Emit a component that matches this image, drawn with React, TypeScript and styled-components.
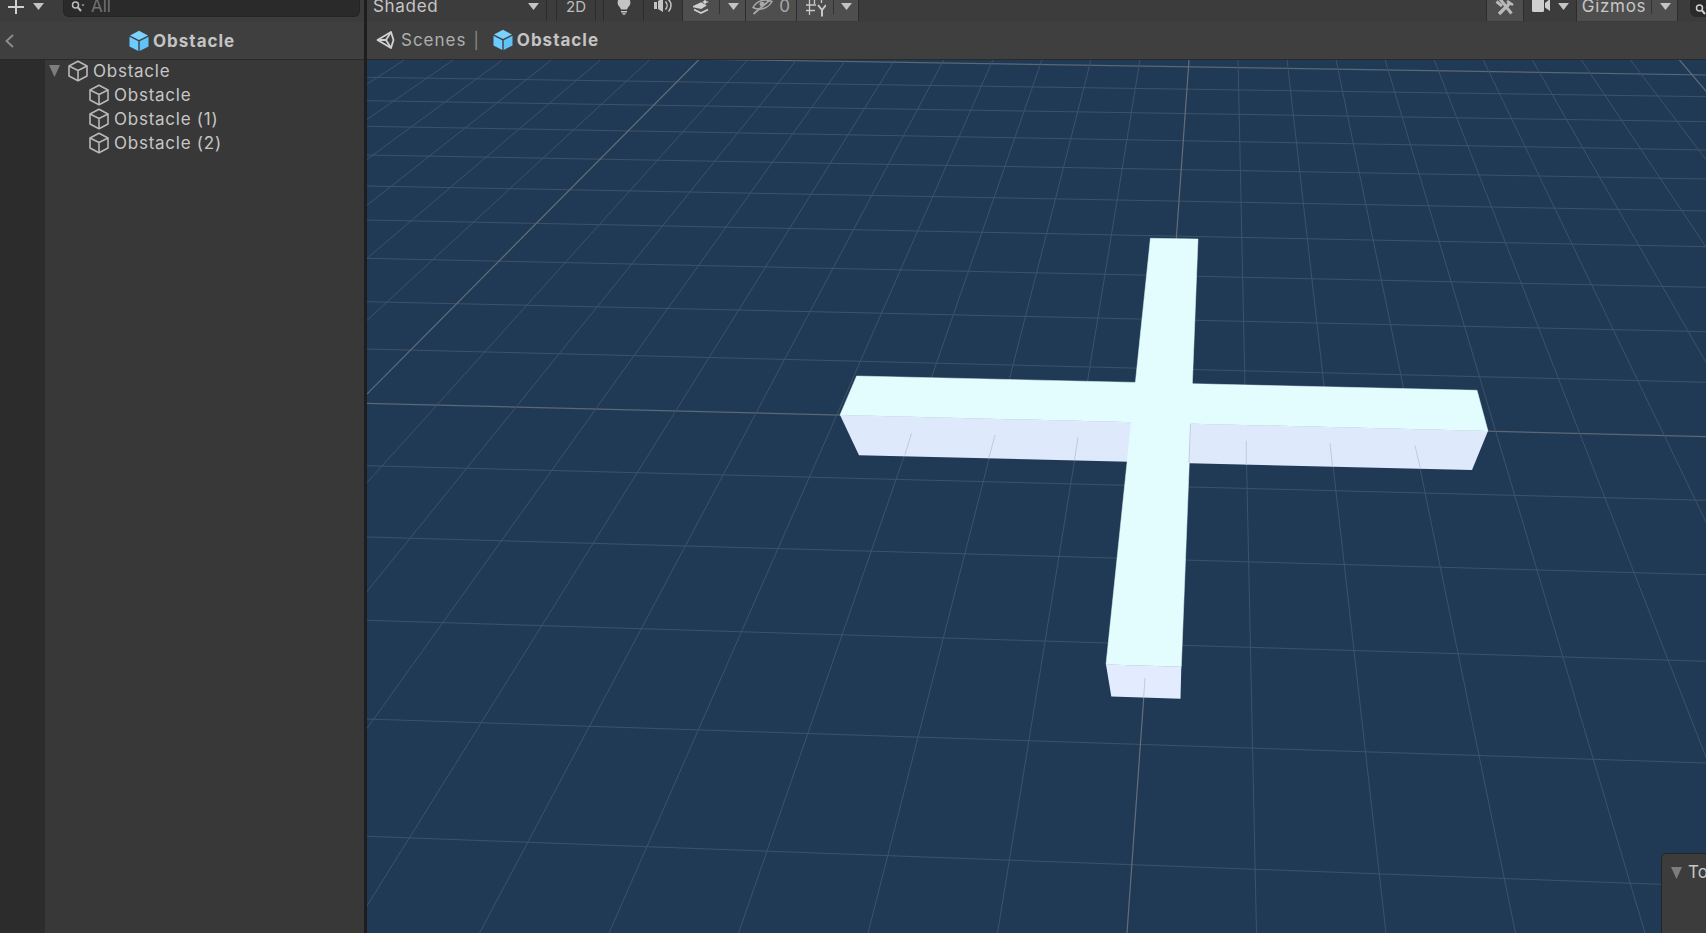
import styled, { createGlobalStyle } from "styled-components";

const GlobalStyle = createGlobalStyle`
   html, body {
      margin: 0;
      padding: 0;
      height: 100%;
      overflow: hidden;
      background: #383838;
   }
   #root {
      height: 100%;
   }
`;

// ground grid: the lines that run into the distance, taken at y=60 and y=933
const DEPTH_LINES = Array.from({ length: 27 }, (_, n) => {
   const i = n - 16;
   return { i, top: 1189 + 49.05 * i, bottom: 1127 + 129.5 * i };
});

// the lines that cross them: y at the left and at the right of the view
const CROSS_LINES = [
   [54, 75, true],
   [77.3, 96.7, false],
   [100.7, 121.7, false],
   [126.3, 150, false],
   [155, 179, false],
   [186, 211, false],
   [220, 246.7, false],
   [258.3, 287.3, false],
   [301.7, 331.7, false],
   [349, 382.3, false],
   [403.3, 436.7, true],
   [465.7, 500.3, false],
   [537, 574.7, false],
   [620.3, 661.3, false],
   [719, 763, false],
   [836.3, 886, false],
] as const;

// bits of grid that show through the side of the bars
const SIDE_TICKS = [
   [911.5, 433.3, 904.8, 455.3],
   [995, 435, 988.8, 458.3],
   [1078, 437.3, 1074.5, 460],
   [1246.3, 440.7, 1246.3, 465],
   [1330, 443.3, 1332.5, 466.7],
   [1415, 445.7, 1420.4, 468.3],
   [1145, 678, 1143.7, 697],
   [1190.5, 424, 1189, 463],
];

function OutlineCube() {
   return (
      <svg width="20" height="22" viewBox="0 0 20 22" fill="none" stroke="#b8b8b8" strokeWidth="1.600" strokeLinejoin="round">
         <path d="M10 1.200 19 6v10L10 20.800 1 16V6Z" />
         <path d="M1 6 10 10.500 19 6M10 10.500V20.800" />
      </svg>
   );
}

function BlueCube() {
   return (
      <svg width="20" height="22" viewBox="0 0 20 22" fill="#6ccbff">
         <path d="M10 .8 19 5.500 10 10 1 5.500Z" fill="#7bd2ff" />
         <path d="M.5 6.800 9.300 11.300V21L.5 16.500Z" />
         <path d="M19.500 6.800 10.700 11.300V21L19.500 16.500Z" fill="#5fc3f8" />
      </svg>
   );
}

function UnityLogo() {
   return (
      <svg width="19" height="20" viewBox="0 0 19 20" fill="none" stroke="#d2d2d2" strokeWidth="1.800" strokeLinejoin="round">
         <path d="M1.500 10 15 2l2.500 8L15 18Z" />
         <path d="M1.500 10H10L15 2M10 10l5 8" />
      </svg>
   );
}

function Caret({ className, color = "#c4c4c4", tall }: { className?: string; color?: string; tall?: boolean }) {
   return (
      <svg className={className} width="11" height={tall ? 12 : 7} viewBox="0 0 11 7" preserveAspectRatio="none">
         <path d="M0 0h11L5.500 7Z" fill={color} />
      </svg>
   );
}

function BulbIcon() {
   return (
      <svg width="14" height="16" viewBox="0 0 14 16" fill="#c4c4c4">
         <path d="M7-4a6.500 6.500 0 0 1 4 11.500L10 9.500H4L3 7.500A6.500 6.500 0 0 1 7-4Z" />
         <path d="M4 11h6v1.500H4ZM5 13.200h4L8 14.800H6Z" />
      </svg>
   );
}

function SpeakerIcon() {
   return (
      <svg width="18" height="14" viewBox="0 0 18 14" fill="#c4c4c4">
         <path d="M0 2h3v7H0ZM4 1l5-3v14L4 9Z" />
         <path d="M11.500 1.500a6 6 0 0 1 0 8M14.500-.5a8.500 8.500 0 0 1 0 12" fill="none" stroke="#c4c4c4" strokeWidth="1.500" />
      </svg>
   );
}

function LayersIcon() {
   return (
      <svg width="17" height="15" viewBox="0 0 17 15" fill="none" stroke="#d0d0d0" strokeWidth="1.800">
         <path d="M1 6.500 8 3.200l4 2.300-4 2.500Z" fill="#d0d0d0" />
         <path d="M1 9.500 8 13l7-3.500" />
         <path d="M12-1l1 2 3 1-3 1-1 2-1-2-2-1 2-1Z" fill="#d0d0d0" stroke="none" />
      </svg>
   );
}

function EyeOffIcon() {
   return (
      <svg width="21" height="15" viewBox="0 0 21 15" fill="none" stroke="#a8a8a8" strokeWidth="1.500">
         <path d="M1 7.500C5 .5 13-2 20 1.500 16 8.500 8 11 1 7.500Z" />
         <path d="M1.500 14 19 -1" strokeWidth="1.800" />
         <circle cx="10" cy="4" r="2.500" fill="#a8a8a8" stroke="none" />
      </svg>
   );
}

function GridSnapIcon() {
   return (
      <svg width="20" height="17" viewBox="0 0 20 17" fill="none" stroke="#c8c8c8" strokeWidth="1.300">
         <path d="M0 5h10M0 10.500h9M3.500 0v15M8.500 0v4" />
         <path d="M12 5l4 5 4-5M16 10v6.500" strokeWidth="2" />
         <path d="M15.500 0v3" />
      </svg>
   );
}

function ToolsIcon() {
   return (
      <svg width="20" height="16" viewBox="0 0 20 16" fill="none" stroke="#b9b9b9">
         <path d="M15 3 4 14" strokeWidth="3.400" />
         <path d="M5-1 16.500 13.500" strokeWidth="3" />
         <path d="M1.500 1.500 7 6" strokeWidth="3" />
         <path d="M12 1 18 5" strokeWidth="2.600" />
      </svg>
   );
}

function CameraIcon() {
   return (
      <svg width="18" height="13" viewBox="0 0 18 13" fill="#cfcfcf">
         <rect x="0" y="-2" width="12" height="14" rx="1.500" />
         <path d="M13 3 18-1v12l-5-3.500Z" />
      </svg>
   );
}

function SearchIcon({ stroke = "#bdbdbd" }: { stroke?: string }) {
   return (
      <svg width="14" height="12" viewBox="0 0 14 12" fill="none" stroke={stroke} strokeWidth="1.500">
         <circle cx="4.500" cy="4" r="3" />
         <path d="M7 6.500 10 10" strokeWidth="2" />
         <path d="M10.500 3.500h3l-1.500 1.800Z" fill={stroke} stroke="none" />
      </svg>
   );
}

function SceneDrawing() {
   return (
      <SceneSvg viewBox="367 60 1339 873" preserveAspectRatio="none">
         {CROSS_LINES.map(([left, right, major]) => (
            <line
               key={left}
               x1="367"
               y1={left}
               x2="1706"
               y2={right}
               stroke={major ? "#5b6875" : "#3e5267"}
               strokeWidth={major ? 1.200 : 1}
            />
         ))}
         {DEPTH_LINES.map(({ i, top, bottom }) => (
            <line
               key={i}
               x1={top}
               y1="60"
               x2={bottom}
               y2="933"
               stroke={i % 10 === 0 ? "#636d78" : "#3e5267"}
               strokeWidth={i % 10 === 0 ? 1.200 : 1}
            />
         ))}
         <polygon points="840,415 859,455.300 1472,470 1488,431" fill="#dfe9fc" />
         <polygon points="856.600,376 1477,390.300 1488,431 840,415" fill="#e3fdff" stroke="#e3fdff" strokeWidth="0.500" />
         <polygon points="1106,664.500 1181.300,666.700 1180.500,698.700 1111.300,696.500" fill="#e2ecfe" />
         <polygon points="1150.400,238.300 1198,239 1181.300,666.700 1106,664.500" fill="#e3fdff" stroke="#e3fdff" strokeWidth="0.500" />
         {SIDE_TICKS.map(([x1, y1, x2, y2]) => (
            <line key={x1} x1={x1} y1={y1} x2={x2} y2={y2} stroke="#c3cad8" strokeWidth="1" />
         ))}
      </SceneSvg>
   );
}

const TREE_CHILDREN = ["Obstacle", "Obstacle (1)", "Obstacle (2)"];

function App() {
   return (
      <Page>
         <GlobalStyle />
         <Sidebar>
            <SideToolbar>
               <PlusSign>
                  <svg width="16" height="16" viewBox="0 0 16 16" fill="#d0d0d0">
                     <path d="M7 0h2v16H7Z" />
                     <path d="M0 7h16v2H0Z" />
                  </svg>
               </PlusSign>
               <ToolCaret />
               <SearchField>
                  <SearchIcon />
                  <SearchHint>All</SearchHint>
               </SearchField>
            </SideToolbar>
            <PanelHeader>
               <BackChevron>
                  <svg width="9" height="14" viewBox="0 0 9 14" fill="none" stroke="#8f8f8f" strokeWidth="1.800">
                     <path d="M8 1 1.500 7 8 13" />
                  </svg>
               </BackChevron>
               <HeaderTitle $centered>
                  <BlueCube />
                  <BoldName>Obstacle</BoldName>
               </HeaderTitle>
            </PanelHeader>
            <SideBody>
               <Gutter />
               <Tree>
                  <TreeRow $depth={0}>
                     <Caret color="#7d7d7d" tall />
                     <OutlineCube />
                     <RowLabel>Obstacle</RowLabel>
                  </TreeRow>
                  {TREE_CHILDREN.map((name) => (
                     <TreeRow key={name} $depth={1}>
                        <OutlineCube />
                        <RowLabel>{name}</RowLabel>
                     </TreeRow>
                  ))}
               </Tree>
            </SideBody>
         </Sidebar>
         <Splitter />
         <Main>
            <SceneToolbar>
               <ShadedSelect>
                  <span>Shaded</span>
                  <Caret />
               </ShadedSelect>
               <ToolCell $width={10} />
               <ToolCell $width={39}>
                  <SmallLabel>2D</SmallLabel>
               </ToolCell>
               <ToolCell $width={8} />
               <ToolCell $width={40}>
                  <BulbIcon />
               </ToolCell>
               <ToolCell $width={39}>
                  <SpeakerIcon />
               </ToolCell>
               <ToolCell $width={38} $active $joined>
                  <LayersIcon />
                  <InnerRule />
               </ToolCell>
               <ToolCell $width={25} $active>
                  <ToolCaret />
               </ToolCell>
               <ToolCell $width={51} $active>
                  <EyeOffIcon />
                  <CountLabel>0</CountLabel>
               </ToolCell>
               <ToolCell $width={38} $active $joined>
                  <GridSnapIcon />
                  <InnerRule />
               </ToolCell>
               <ToolCell $width={24} $active>
                  <ToolCaret />
               </ToolCell>
               <ToolbarSpacer />
               <ToolCell $width={38} $active $leading>
                  <ToolsIcon />
               </ToolCell>
               <ToolCell $width={53}>
                  <CameraIcon />
                  <CameraCaret />
               </ToolCell>
               <ToolCell $width={76} $active $joined>
                  <GizmosLabel>Gizmos</GizmosLabel>
                  <InnerRule />
               </ToolCell>
               <ToolCell $width={25} $active>
                  <ToolCaret />
               </ToolCell>
               <SceneSearch>
                  <SearchIcon stroke="#cfcfcf" />
               </SceneSearch>
            </SceneToolbar>
            <PanelHeader>
               <Breadcrumbs>
                  <UnityLogo />
                  <ScenesLink>Scenes</ScenesLink>
                  <CrumbDivider>|</CrumbDivider>
                  <HeaderTitle>
                     <BlueCube />
                     <BoldName>Obstacle</BoldName>
                  </HeaderTitle>
               </Breadcrumbs>
            </PanelHeader>
            <Viewport>
               <SceneDrawing />
               <ToolOverlay>
                  <Caret color="#7d7d7d" tall />
                  <OverlayTitle>Tool Settings</OverlayTitle>
               </ToolOverlay>
            </Viewport>
         </Main>
      </Page>
   );
}

export default App;

const Page = styled.div`
   display: flex;
   width: 100%;
   height: 100%;
   overflow: hidden;
   font-family: Inter, "Liberation Sans", sans-serif;
   color: #c6c6c6;
`;

const Sidebar = styled.aside`
   display: flex;
   flex-direction: column;
   flex: 0 0 364px;
`;

const Splitter = styled.div`
   flex: 0 0 3px;
   background-color: #1d1d1d;
`;

const Main = styled.main`
   display: flex;
   flex-direction: column;
   flex: 1;
   min-width: 0;
`;

const ToolCaret = styled(Caret)`
   margin-top: 3px;
`;

const CameraCaret = styled(Caret)`
   margin: 3px 0 0 8px;
`;

const SideToolbar = styled.div`
   display: flex;
   align-items: flex-start;
   flex: 0 0 22px;
   min-height: 0;
   overflow: hidden;
   padding-left: 8px;
   background-color: #3c3c3c;

   > svg {
      margin-left: 9px;
   }
`;

const PlusSign = styled.span`
   display: block;
   height: 14px;
   overflow: hidden;

   svg {
      display: block;
      margin-top: -1px;
   }
`;

const SearchField = styled.div`
   display: flex;
   align-items: flex-start;
   gap: 6px;
   width: 297px;
   height: 17px;
   margin-left: 19px;
   padding-left: 7px;
   box-sizing: border-box;
   background-color: #2a2a2a;
   border-radius: 0 0 6px 6px;
   border: 1px solid #242424;
   border-top: none;

   svg {
      margin-top: 1px;
   }
`;

const SearchHint = styled.span`
   font-size: 17px;
   line-height: 13px;
   color: #727272;
`;

const PanelHeader = styled.div`
   display: flex;
   align-items: center;
   flex: 0 0 38px;
   min-height: 0;
   box-sizing: border-box;
   background-color: #3f3f3f;
   border-bottom: 1px solid #2a2a2a;
`;

const BackChevron = styled.span`
   display: flex;
   margin-left: 5px;
`;

const HeaderTitle = styled.div<{ $centered?: boolean }>`
   display: flex;
   align-items: center;
   gap: 4px;
   margin-left: ${(p) => (p.$centered ? "115px" : "0")};
`;

const BoldName = styled.span`
   font-size: 17px;
   font-weight: 700;
   letter-spacing: 1px;
   color: #c4c4c4;
`;

const Breadcrumbs = styled.div`
   display: flex;
   align-items: center;
   padding: 0 0 2px 9px;
`;

const ScenesLink = styled.span`
   margin-left: 6px;
   font-size: 17px;
   letter-spacing: 1px;
   color: #aeaeae;
`;

const CrumbDivider = styled.span`
   margin: 0 14px 0 7px;
   font-size: 16px;
   color: #8c8c8c;
`;

const SideBody = styled.div`
   display: flex;
   flex: 1;
`;

const Gutter = styled.div`
   flex: 0 0 45px;
   background-color: #2c2c2c;
`;

const Tree = styled.ul`
   flex: 1;
   margin: 0;
   padding: 0;
   list-style: none;
   background-color: #383838;
`;

const TreeRow = styled.li<{ $depth: number }>`
   display: flex;
   align-items: center;
   height: 24px;
   box-sizing: border-box;
   padding: 0 0 2px ${(p) => (p.$depth === 0 ? 4 : 44)}px;

   > svg:first-child {
      margin-right: ${(p) => (p.$depth === 0 ? 8 : 0)}px;
   }
`;

const RowLabel = styled.span`
   margin-left: 5px;
   font-size: 17px;
   letter-spacing: 0.75px;
   color: #c6c6c6;
`;

const SceneToolbar = styled.div`
   display: flex;
   align-items: stretch;
   flex: 0 0 22px;
   min-height: 0;
   overflow: hidden;
   background-color: #3c3c3c;
`;

const ShadedSelect = styled.div`
   display: flex;
   justify-content: space-between;
   align-items: flex-start;
   flex: 0 0 180px;
   box-sizing: border-box;
   padding: 0 7px 0 6px;
   border-right: 1px solid #2c2c2c;
   margin-bottom: 1px;
   font-size: 17px;
   line-height: 13px;
   letter-spacing: 0.7px;
   color: #c6c6c6;

   svg {
      margin-top: 3px;
   }
`;

const ToolCell = styled.div<{ $width: number; $active?: boolean; $joined?: boolean; $leading?: boolean }>`
   position: relative;
   display: flex;
   justify-content: center;
   align-items: flex-start;
   flex: 0 0 ${(p) => p.$width}px;
   box-sizing: border-box;
   margin-bottom: 1px;
   background-color: ${(p) => (p.$active ? "#4e4e4e" : "transparent")};
   border-right: 1px solid ${(p) => (p.$joined ? "transparent" : "#2c2c2c")};
   ${(p) => (p.$leading ? "border-left: 1px solid #2c2c2c;" : "")}
`;

// short rule between a button and its drop-down arrow
const InnerRule = styled.span`
   position: absolute;
   top: 0;
   right: 0;
   width: 1px;
   height: 14px;
   background-color: #333333;
`;

const SmallLabel = styled.span`
   font-size: 15px;
   line-height: 13px;
   color: #bdbdbd;
`;

const CountLabel = styled.span`
   margin-left: 6px;
   font-size: 17px;
   line-height: 13px;
   color: #a8a8a8;
`;

const GizmosLabel = styled.span`
   margin-right: 1px;
   font-size: 17px;
   line-height: 13px;
   letter-spacing: 0.7px;
   color: #c6c6c6;
`;

const ToolbarSpacer = styled.div`
   flex: 1;
`;

const SceneSearch = styled.div`
   flex: 0 0 16px;
   box-sizing: border-box;
   height: 17px;
   margin-left: 12px;
   padding-left: 5px;
   overflow: hidden;
   background-color: #2a2a2a;
   border-radius: 0 0 0 6px;
`;

const Viewport = styled.div`
   position: relative;
   flex: 1;
   min-height: 0;
   overflow: hidden;
   background-color: #203a55;
`;

const SceneSvg = styled.svg`
   display: block;
   width: 100%;
   height: 100%;
`;

const ToolOverlay = styled.div`
   position: absolute;
   top: 793px;
   left: 1294px;
   width: 300px;
   height: 100px;
   display: flex;
   align-items: flex-start;
   gap: 6px;
   padding: 9px 0 0 9px;
   box-sizing: border-box;
   background-color: #3c3c3c;
   border: 1px solid #242424;
   border-radius: 5px;

   svg {
      margin-top: 4px;
   }
`;

const OverlayTitle = styled.span`
   font-size: 17px;
   line-height: 18px;
   white-space: nowrap;
   color: #c6c6c6;
`;
